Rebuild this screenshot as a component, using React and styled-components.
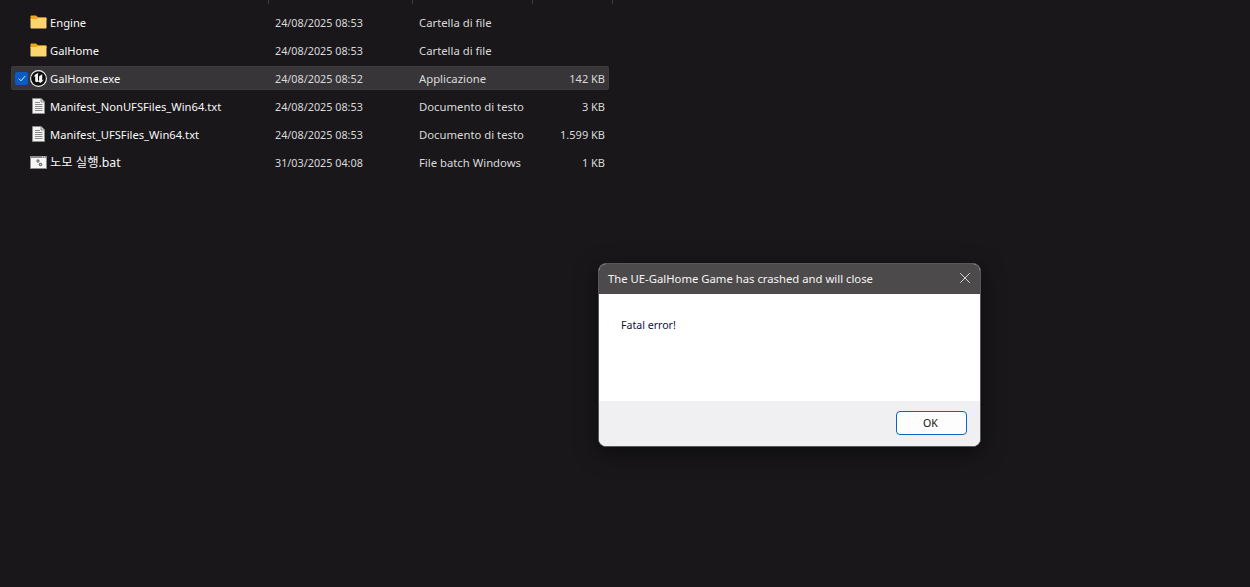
import React from "react";
import styled, { createGlobalStyle } from "styled-components";
import { X } from "lucide-react";

const GlobalStyle = createGlobalStyle`
  html, body {
    margin: 0;
    height: 100%;
    background: #19171a;
  }
  body {
    font-family: "Noto Sans", "Noto Sans CJK KR", sans-serif;
    overflow: hidden;
  }
`;

const files = [
  { name: "Engine", date: "24/08/2025 08:53", type: "Cartella di file", size: "", icon: "folder" },
  { name: "GalHome", date: "24/08/2025 08:53", type: "Cartella di file", size: "", icon: "folder" },
  { name: "GalHome.exe", date: "24/08/2025 08:52", type: "Applicazione", size: "142 KB", icon: "unreal", selected: true },
  { name: "Manifest_NonUFSFiles_Win64.txt", date: "24/08/2025 08:53", type: "Documento di testo", size: "3 KB", icon: "text" },
  { name: "Manifest_UFSFiles_Win64.txt", date: "24/08/2025 08:53", type: "Documento di testo", size: "1.599 KB", icon: "text" },
  { name: "노모 실행.bat", date: "31/03/2025 04:08", type: "File batch Windows", size: "1 KB", icon: "batch" },
];

const FolderIcon = () => (
  <svg width="17" height="14" viewBox="0 0 17 14">
    <path d="M0.5 1.5C0.5 0.8 1 0.5 1.5 0.5H6L8 2.2H15.5C16.2 2.2 16.5 2.6 16.5 3.2V5H0.5Z" fill="#eea818" />
    <path d="M0.5 4H6.5L8.2 3H15.5C16.2 3 16.5 3.4 16.5 4V12.5C16.5 13.2 16.2 13.5 15.5 13.5H1.5C0.8 13.5 0.5 13.2 0.5 12.5Z" fill="#fdd56f" />
  </svg>
);

const UnrealIcon = () => (
  <svg width="17" height="17" viewBox="0 0 17 17">
    <circle cx="8.5" cy="8.5" r="7.9" fill="#0c0c0c" stroke="#f2f2f2" strokeWidth="1.1" />
    <path
      d="M8.6 3C6.4 3.3 4.5 4.8 3.7 7.2L5.2 6V10.8C5.2 12 6.8 12.6 8 11.8L8.6 11.4L10.2 13C11.8 12.4 13 11.2 13.6 9.6L12.2 10.5V4.2L9.1 6.2V10.4L8.5 10.8L8 10.4V3.9Z"
      fill="#f5f5f5"
    />
  </svg>
);

const TextIcon = () => (
  <svg width="13" height="16" viewBox="0 0 13 16">
    <path d="M0.5 0.5H9L12.5 4V15.5H0.5Z" fill="#f4f4f4" stroke="#8d8d8d" />
    <path d="M9 0.5V4H12.5" fill="#d8d8d8" stroke="#8d8d8d" />
    <path d="M3 4.5H8M3 6.5H10.5M3 8.5H10.5M3 10.5H10.5M3 12.5H10.5" stroke="#8a8a8a" />
  </svg>
);

const BatchIcon = () => (
  <svg width="17" height="13" viewBox="0 0 17 13">
    <rect x="0" y="0" width="17" height="13" fill="#8c8c8c" />
    <rect x="1" y="2" width="15" height="10" fill="#f6f6f6" />
    <rect x="12" y="0.5" width="1" height="1" fill="#e8e8e8" />
    <rect x="14" y="0.5" width="1" height="1" fill="#e8e8e8" />
    <circle cx="8" cy="5" r="1.7" fill="#808080" />
    <circle cx="10.5" cy="8.5" r="1.8" fill="#6f6f6f" />
    <circle cx="10.5" cy="8.5" r="0.6" fill="#f0f0f0" />
  </svg>
);

const icons = { folder: FolderIcon, unreal: UnrealIcon, text: TextIcon, batch: BatchIcon };

const columns = "257px 144px 120px 77px";

const Explorer = styled.div`
  width: 598px;
  margin-left: 11px;
`;

const HeaderTicks = styled.div`
  display: grid;
  grid-template-columns: 258px 144px 120px 80px;
  height: 4px;
  margin-bottom: 6px;
`;

const Tick = styled.span`
  border-right: 1px solid #3d3b3e;
`;

const Row = styled.div`
  display: grid;
  grid-template-columns: ${columns};
  align-items: center;
  box-sizing: border-box;
  height: 24px;
  margin-bottom: 4px;
  border-radius: 3px;
  font-size: 11.2px;
  color: #e6e6e6;
  background: ${(p) => (p.$selected ? "#373538" : "transparent")};
  box-shadow: ${(p) => (p.$selected ? "inset 0 0 0 1px #3d3b3e" : "none")};
`;

const NameCell = styled.div`
  display: flex;
  align-items: center;
  min-width: 0;
  white-space: nowrap;
  color: #f8f8f8;
`;

const CheckSlot = styled.span`
  display: flex;
  flex: 0 0 19px;
  padding-left: 4px;
  box-sizing: border-box;
`;

const CheckBox = styled.span`
  display: flex;
  align-items: center;
  justify-content: center;
  width: 13px;
  height: 13px;
  border-radius: 2px;
  background: #0a5cc4;
`;

const IconSlot = styled.span`
  display: flex;
  align-items: center;
  justify-content: center;
  flex: 0 0 17px;
  height: 17px;
  margin-right: 3px;
`;

const KoreanName = styled.span`
  font-size: 12.3px;
`;

const DateCell = styled.div`
  padding-left: 7px;
  white-space: nowrap;
  font-size: 10.8px;
  color: #dadada;
`;

const TypeCell = styled.div`
  padding-left: 7px;
  white-space: nowrap;
  font-size: 11.3px;
  color: #dadada;
`;

const SizeCell = styled.div`
  padding-right: 4px;
  text-align: right;
  white-space: nowrap;
  font-size: 11px;
  color: #dadada;
`;

const Dialog = styled.div`
  position: absolute;
  left: 598px;
  top: 263px;
  width: 383px;
  height: 184px;
  box-sizing: border-box;
  display: flex;
  flex-direction: column;
  overflow: hidden;
  border: 1px solid #5a585a;
  border-radius: 8px;
  background: #fff;
  box-shadow: 0 6px 22px rgba(0, 0, 0, 0.55);
`;

const TitleBar = styled.div`
  display: flex;
  align-items: center;
  justify-content: space-between;
  flex: 0 0 30px;
  padding: 0 6px 2px 9px;
  box-sizing: border-box;
  background: #4d4a4b;
  color: #f5f5f5;
  font-size: 11.3px;
`;

const Close = styled.span`
  display: flex;
  color: #efefef;
`;

const Body = styled.div`
  flex: 1;
  padding: 24px 22px;
  font-size: 10.6px;
  line-height: 14px;
  color: #101040;
`;

const Footer = styled.div`
  display: flex;
  align-items: center;
  justify-content: flex-end;
  box-sizing: border-box;
  flex: 0 0 45px;
  padding: 0 13px 2px 0;
  background: #f0eff2;
`;

const OkButton = styled.button`
  width: 71px;
  height: 24px;
  padding: 0 2px 0 0;
  border: 1px solid #0a67c0;
  border-radius: 4px;
  background: #fdfdfe;
  color: #111;
  font: 10.6px "Noto Sans", sans-serif;
`;

const App = () => {
  return (
    <>
      <GlobalStyle />
      <Explorer>
        <HeaderTicks>
          <Tick />
          <Tick />
          <Tick />
          <Tick />
        </HeaderTicks>
        {files.map((file) => {
          const Icon = icons[file.icon];
          return (
            <Row key={file.name} $selected={file.selected}>
              <NameCell>
                <CheckSlot>
                  {file.selected && (
                    <CheckBox>
                      <svg width="8" height="7" viewBox="0 0 8 7">
                        <path d="M0.8 3.6L3 5.8L7.2 1" fill="none" stroke="#dfeaf8" strokeWidth="1" />
                      </svg>
                    </CheckBox>
                  )}
                </CheckSlot>
                <IconSlot>
                  <Icon />
                </IconSlot>
                {file.icon === "batch" ? <KoreanName>{file.name}</KoreanName> : file.name}
              </NameCell>
              <DateCell>{file.date}</DateCell>
              <TypeCell>{file.type}</TypeCell>
              <SizeCell>{file.size}</SizeCell>
            </Row>
          );
        })}
      </Explorer>
      <Dialog>
        <TitleBar>
          The UE-GalHome Game has crashed and will close
          <Close>
            <X size={18} strokeWidth={1.1} />
          </Close>
        </TitleBar>
        <Body>Fatal error!</Body>
        <Footer>
          <OkButton>OK</OkButton>
        </Footer>
      </Dialog>
    </>
  );
};

export default App;
